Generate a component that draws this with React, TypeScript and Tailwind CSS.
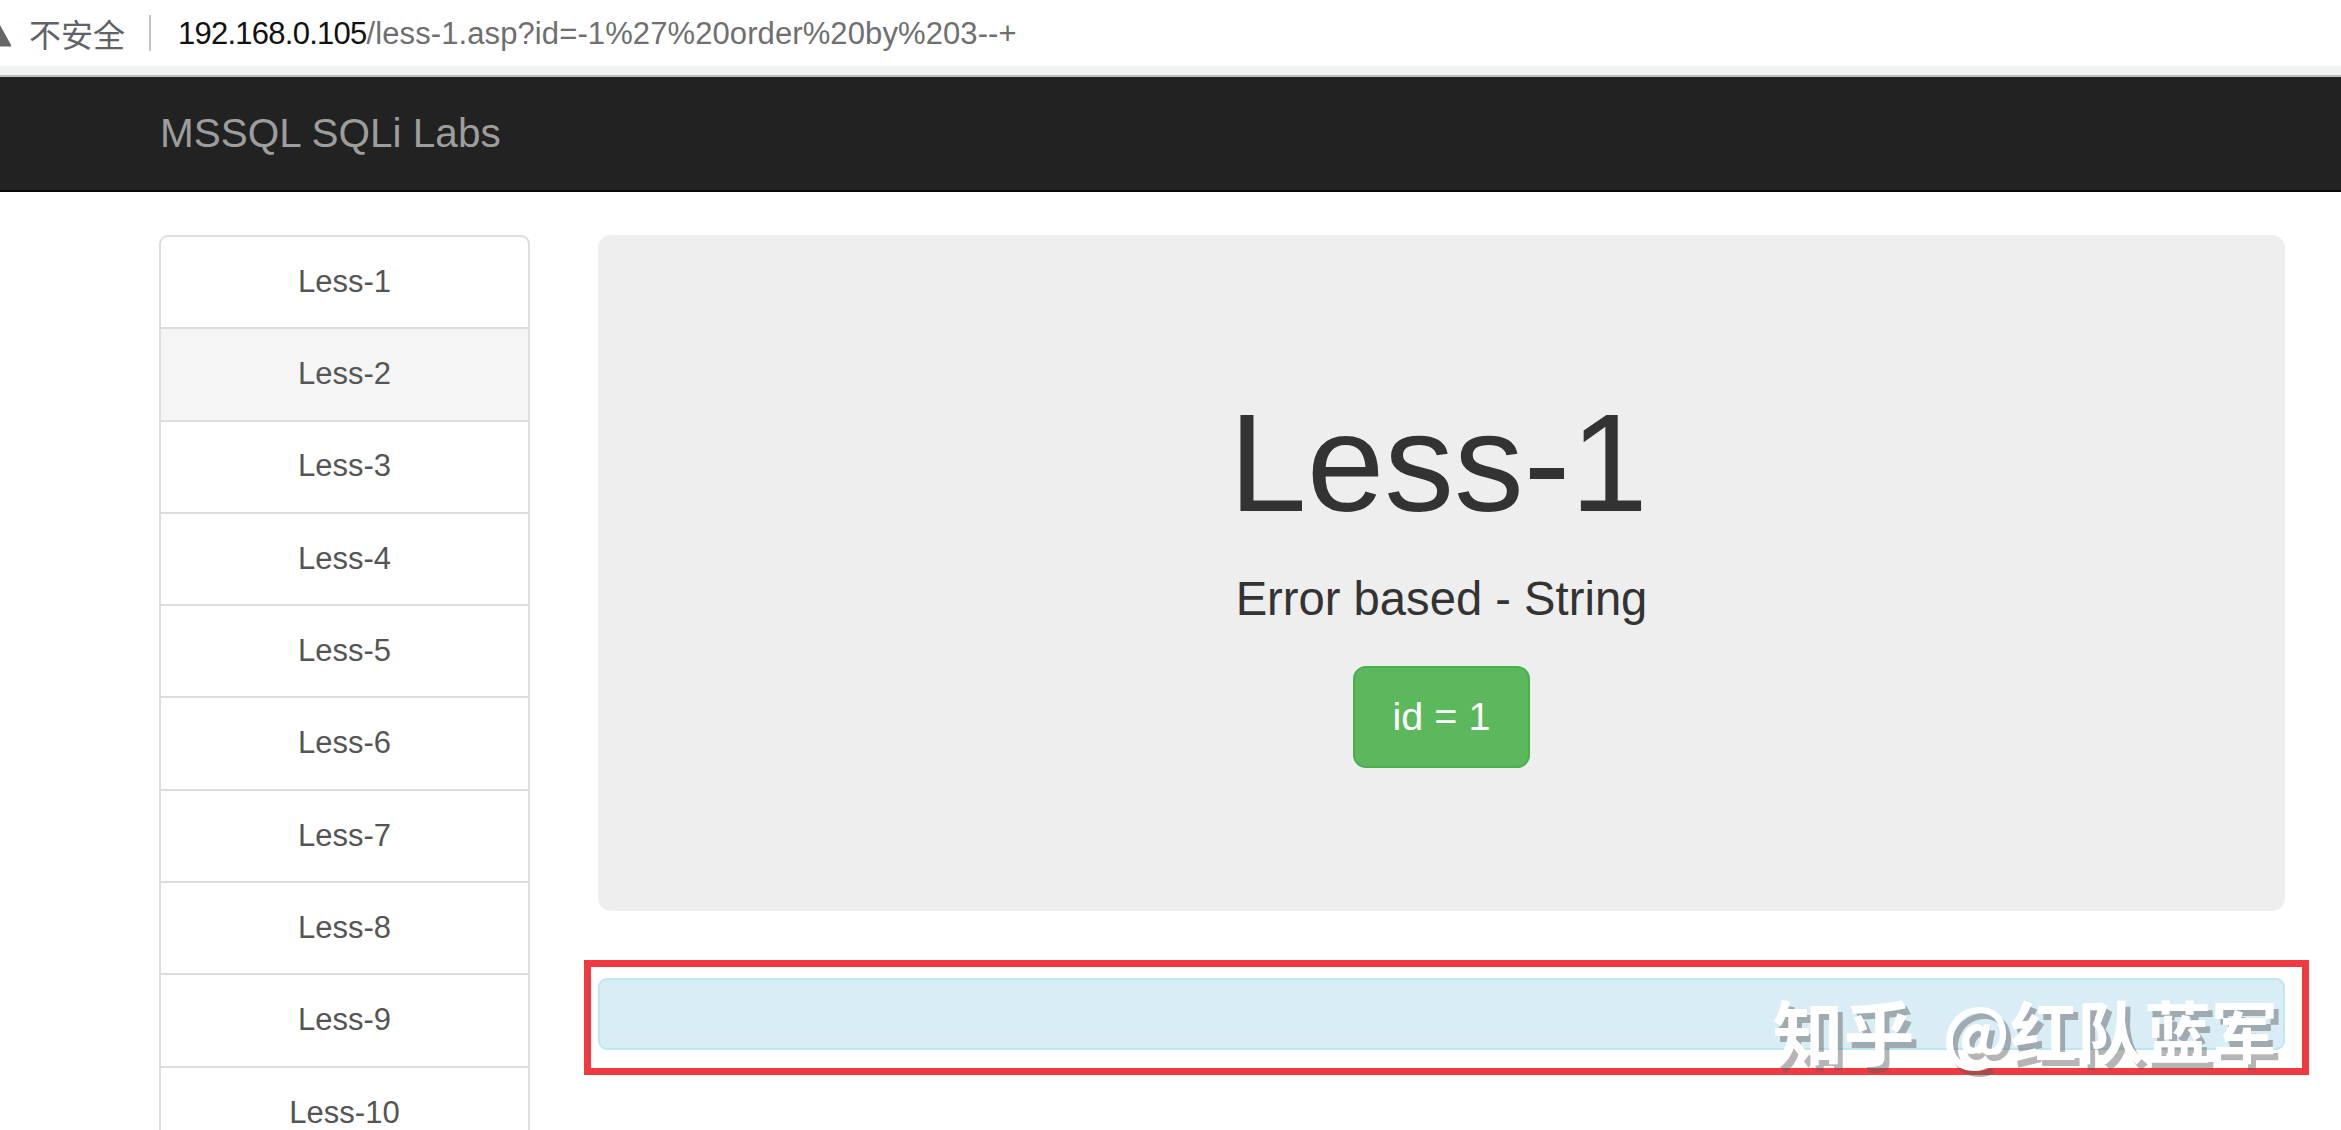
const lessons = ["Less-1", "Less-2", "Less-3", "Less-4", "Less-5", "Less-6", "Less-7", "Less-8", "Less-9", "Less-10"];

const AddressBar = () => (
  <div className="h-[66px] bg-white flex items-center relative">
    <svg className="absolute left-[-12px] top-[23px]" width="24" height="24" viewBox="0 0 24 24">
      <path d="M12 2 L23 22 Q23.5 23.5 22 23.5 L2 23.5 Q0.5 23.5 1 22 Z" fill="#666" />
    </svg>
    <span className="ml-[29px] text-[32px] leading-none text-[#5f6368] font-['Noto_Sans_CJK_SC',sans-serif]">不安全</span>
    <div className="ml-[24px] w-[2px] h-[36px] bg-[#c4c4c4]" />
    <div className="ml-[27px] text-[31px] leading-none tracking-[0.1px] text-[#6f6f6f] font-['Liberation_Sans',sans-serif] whitespace-nowrap">
      <span className="text-[#111] tracking-[-0.75px]">192.168.0.105</span>/less-1.asp?id=-1%27%20order%20by%203--+
    </div>
  </div>
);

const Navbar = () => (
  <>
    <div className="h-[9px] bg-[#f1f3f4]" />
    <div className="h-[2px] bg-[#bdbdbd]" />
    <div className="h-[115px] bg-[#222] border-b-2 border-[#080808] flex items-center pl-[160px]">
      <span className="text-[40.5px] text-[#9d9d9d]">MSSQL SQLi Labs</span>
    </div>
  </>
);

const Sidebar = () => (
  <div className="w-[371px] shrink-0 flex flex-col">
    {lessons.map((name, i) => (
      <div
        key={name}
        className={`h-[94.3px] shrink-0 -mb-[2px] border-2 border-[#ddd] flex items-center justify-center text-[31px] text-[#555] ${
          i === 0 ? "rounded-t-[9px]" : ""
        } ${i === 1 ? "bg-[#f5f5f5]" : "bg-white"}`}
      >
        {name}
      </div>
    ))}
  </div>
);

const App = () => {
  return (
    <div className="w-[2341px] h-[1130px] overflow-hidden bg-white font-['Liberation_Sans',sans-serif]">
      <AddressBar />
      <Navbar />
      <div className="flex pl-[159px] pr-[56px] pt-[43px] gap-[68px]">
        <Sidebar />
        <div className="flex-1 flex flex-col">
          <div className="h-[676px] rounded-[13px] bg-[#eee] flex flex-col items-center text-[#333]">
            <h1 className="mt-[145px] text-[139.6px] leading-[166px] -translate-x-[3px]">Less-1</h1>
            <p className="mt-[20px] text-[47.2px] leading-[66px]">Error based - String</p>
            <div className="mt-[34px] w-[177px] h-[102px] rounded-[13px] bg-[#5cb85c] border-2 border-[#4cae4c] text-white text-[39.6px] flex items-center justify-center">
              id = 1
            </div>
          </div>
          <div className="mt-[67px] h-[72px] relative rounded-[9px] bg-[#d9edf7] border-2 border-[#bce8f1]">
            <div className="absolute left-[-16px] right-[-26px] top-[-20px] bottom-[-27px] border-[7px] border-[#f03a3f]" />
            <div className="absolute right-[5px] top-[10px] flex items-center gap-[28px] text-[67px] leading-[78px] font-bold whitespace-nowrap text-white [text-shadow:5px_6px_0_rgba(90,90,90,0.45)] font-['Noto_Sans_CJK_SC',sans-serif]">
              <span className="text-[71px]">知乎</span>
              <span>@红队蓝军</span>
            </div>
          </div>
        </div>
      </div>
    </div>
  );
};

export default App;
